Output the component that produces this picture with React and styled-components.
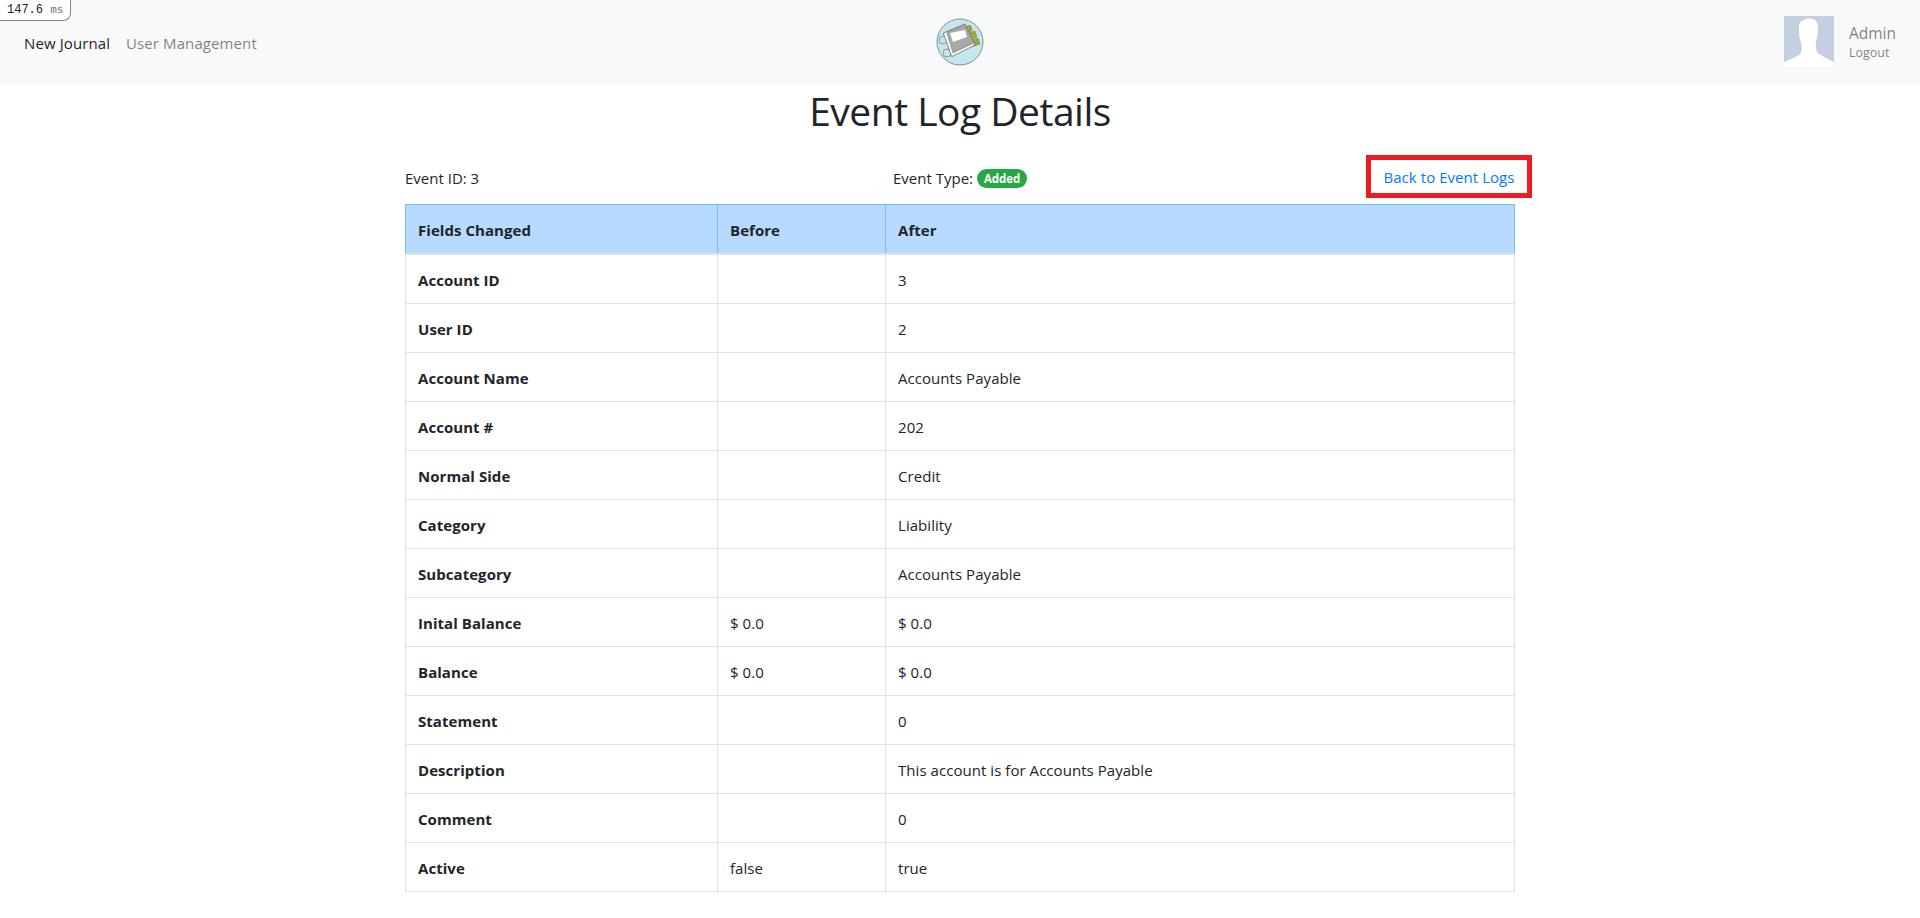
import React from "react";
import styled, { createGlobalStyle } from "styled-components";

const Global = createGlobalStyle`
  html, body { margin: 0; padding: 0; background: #fff; }
  body { font-family: "Open Sans", "Noto Sans", sans-serif; font-size: 15px; line-height: 24px; color: #212529; overflow: hidden; }
  * { box-sizing: border-box; }
`;

const Timer = styled.div`
  position: absolute; top: 0; left: 0; width: 71px; height: 21px;
  background: #fff; border: 1px solid #888; border-top: 0; border-left: 0;
  border-bottom-right-radius: 8px;
  font-family: "Liberation Mono", monospace; font-size: 12px; line-height: 20px;
  padding-left: 7px; color: #222; white-space: pre;
  span { color: #777; font-size: 11px; }
`;
const Navbar = styled.nav`
  height: 84px; background: #f8f9fa; display: grid; grid-template-columns: 1fr auto 1fr;
  align-items: center; padding: 0 24px;
`;
const NavLinks = styled.div`display: flex; gap: 16px; padding-top: 2px;`;
const NavLink = styled.a`color: ${p => (p.$active ? "rgba(0,0,0,.9)" : "rgba(0,0,0,.5)")}; font-size: 15px; letter-spacing: 0.1px;`;
const Logo = styled.svg`width: 48px; height: 48px; display: block;`;
const UserBox = styled.div`display: flex; justify-content: flex-end; align-items: center; gap: 15px;`;
const Avatar = styled.svg`width: 50px; height: 50px; display: block; margin-bottom: 2px;`;
const UserText = styled.div`display: flex; flex-direction: column; color: rgba(0,0,0,.5);`;
const UserName = styled.span`font-size: 15.5px; line-height: 22px;`;
const Logout = styled.span`font-size: 12.5px; line-height: 18px;`;

const Container = styled.main`width: 1140px; margin: 0 auto; padding: 0 15px;`;
const Title = styled.h1`margin: 0; font-size: 39px; font-weight: 400; line-height: 54px; text-align: center; letter-spacing: -0.5px;`;
const Info = styled.div`display: grid; grid-template-columns: 488px 1fr auto; align-items: center; height: 66px; padding-top: 10px;`;
const InfoText = styled.div`font-size: 15px; padding-top: 4px;`;
const Badge = styled.span`
  display: inline-block; background: #28a745; color: #fff; font-size: 11.5px; font-weight: 700;
  line-height: 13px; padding: 3px 7px; border-radius: 10px; margin-left: 4px; vertical-align: 1px; letter-spacing: -0.1px;
`;
const BackLink = styled.a`
  display: block; width: 166px; height: 43px; margin-right: -17px; border: 5px solid #ed1c24;
  color: #007bff; font-size: 15px; line-height: 35px; text-align: center; letter-spacing: 0.05px;
`;
const Table = styled.table`width: 1110px; border-collapse: collapse; table-layout: fixed; font-size: 15px; letter-spacing: 0.05px;`;
const Head = styled.th`
  background: #b8daff; border: 1px solid #7abaff; border-bottom-width: 2px; border-bottom-color: #dee2e6; text-align: left; padding: 13px 12px 11px;
  height: 49px; font-weight: 700; width: ${p => p.$w}px;
`;
const Cell = styled.td`border: 1px solid #dee2e6; padding: 13px 12px 11px; height: 49px; font-weight: ${p => (p.$bold ? 700 : 400)};`;

const rows = [
  ["Account ID", "", "3"],
  ["User ID", "", "2"],
  ["Account Name", "", "Accounts Payable"],
  ["Account #", "", "202"],
  ["Normal Side", "", "Credit"],
  ["Category", "", "Liability"],
  ["Subcategory", "", "Accounts Payable"],
  ["Inital Balance", "$ 0.0", "$ 0.0"],
  ["Balance", "$ 0.0", "$ 0.0"],
  ["Statement", "", "0"],
  ["Description", "", "This account is for Accounts Payable"],
  ["Comment", "", "0"],
  ["Active", "false", "true"],
];

export default function App() {
  return (
    <>
      <Global />
      <Timer>147.6 <span>ms</span></Timer>
      <Navbar>
        <NavLinks>
          <NavLink $active>New Journal</NavLink>
          <NavLink>User Management</NavLink>
        </NavLinks>
        <Logo viewBox="0 0 48 48">
          <circle cx="24" cy="24" r="23" fill="#c3e6ef" stroke="#7d9298" strokeWidth="1" />
          <g fill="none" stroke="#8a9a9e" strokeWidth="1">
            <circle cx="7" cy="22" r="4" /><circle cx="11" cy="35" r="4" />
          </g>
          <rect x="30" y="8" width="5.5" height="5.5" fill="#a5a838" stroke="#77781f" strokeWidth=".6" transform="rotate(-20 33 11)" />
          <rect x="34" y="14" width="6" height="6" fill="#a5a838" stroke="#77781f" strokeWidth=".6" transform="rotate(-20 37 17)" />
          <rect x="36" y="21" width="7" height="6" fill="#a5a838" stroke="#77781f" strokeWidth=".6" transform="rotate(-20 40 24)" />
          <polygon points="7.3,15 29,6 39,27 15.7,38.7" fill="#fff" stroke="#666" strokeWidth=".8" />
          <polygon points="10.7,14.3 29,7 38,25 17,35" fill="#a9a9a9" stroke="#777" strokeWidth=".6" />
          <polygon points="14,15 29,12 31,19 17,24" fill="#fff" />
        </Logo>
        <UserBox>
          <Avatar viewBox="0 0 50 50">
            <rect width="50" height="50" fill="#c5cfe2" />
            <path d="M15 9 C16 3 28 0 32 5 C35 9 34 18 33 22 C31 27 32 34 33 36 C36 39 44 43 50 46 L50 50 L0 50 L0 46 C6 43 14 41 17 37 C18 33 18 29 17 26 C15 22 15 15 15 9 Z" fill="#fff" />
          </Avatar>
          <UserText>
            <UserName>Admin</UserName>
            <Logout>Logout</Logout>
          </UserText>
        </UserBox>
      </Navbar>
      <Container>
        <Title>Event Log Details</Title>
        <Info>
          <InfoText>Event ID: 3</InfoText>
          <InfoText>Event Type:<Badge>Added</Badge></InfoText>
          <BackLink>Back to Event Logs</BackLink>
        </Info>
        <Table>
          <thead>
            <tr>
              <Head $w={312}>Fields Changed</Head>
              <Head $w={168}>Before</Head>
              <Head>After</Head>
            </tr>
          </thead>
          <tbody>
            {rows.map(r => (
              <tr key={r[0]}>
                <Cell $bold>{r[0]}</Cell>
                <Cell>{r[1]}</Cell>
                <Cell>{r[2]}</Cell>
              </tr>
            ))}
          </tbody>
        </Table>
      </Container>
    </>
  );
}
